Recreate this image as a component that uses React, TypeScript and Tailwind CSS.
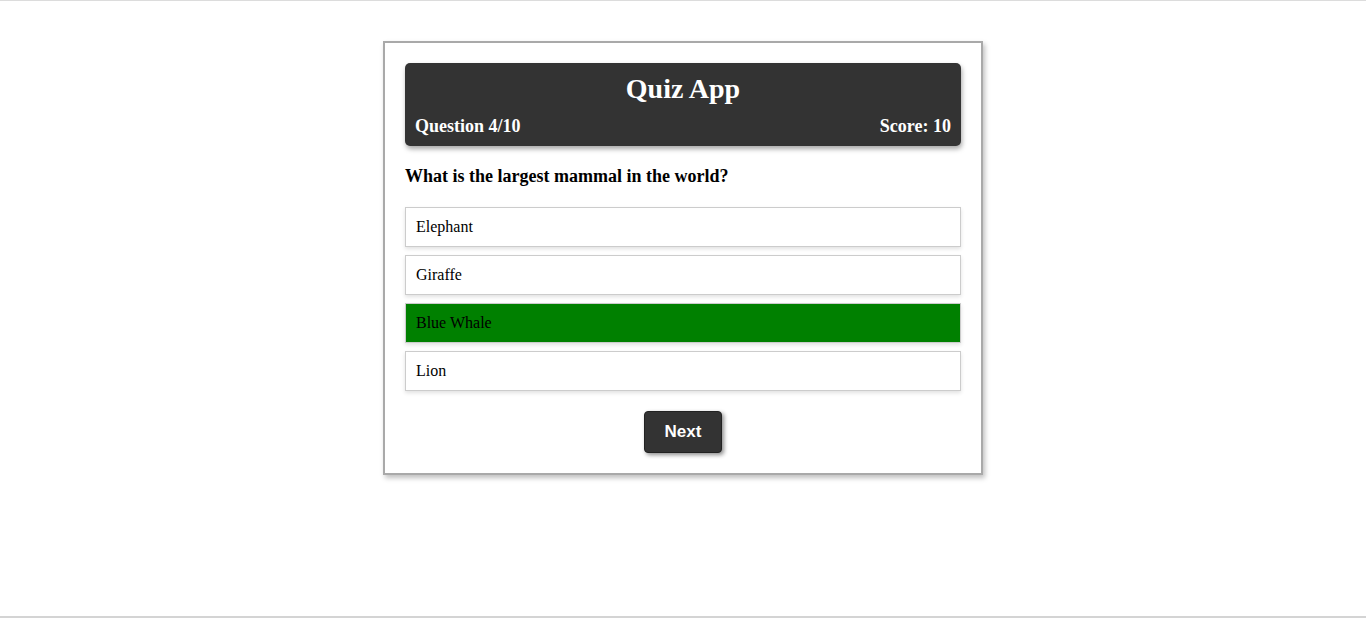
import { useState } from 'react';

const options = ['Elephant', 'Giraffe', 'Blue Whale', 'Lion'];

export default function App() {
  const [selected] = useState('Blue Whale');

  return (
    <div className="h-[618px] flex flex-col bg-white border-t border-[#dcdcdc] font-['Liberation_Serif','Times_New_Roman',serif]">
      <div className="flex-1 flex justify-center pt-[40px]">
        <div className="w-[600px] h-fit border-2 border-[#a9a9a9] bg-white p-5 shadow-[2px_3px_5px_rgba(0,0,0,0.25)]">
          <div className="bg-[#333333] rounded-[5px] px-[10px] pt-[10px] pb-[10px] text-white shadow-[1px_3px_5px_rgba(0,0,0,0.35)]">
            <h1 className="text-[28px] leading-[32px] font-bold text-center">Quiz App</h1>
            <div className="flex justify-between items-center mt-[11px] text-[18px] leading-[20px] font-bold">
              <span>Question 4/10</span>
              <span>Score: 10</span>
            </div>
          </div>

          <p className="mt-[20px] mb-[21px] text-[18px] leading-[20px] font-bold text-black">
            What is the largest mammal in the world?
          </p>

          <div className="flex flex-col gap-2">
            {options.map((opt) => (
              <div
                key={opt}
                className={`border border-[#cccccc] px-[10px] py-[10px] text-[16px] leading-[18px] text-black shadow-[0_2px_4px_rgba(0,0,0,0.12)] ${
                  opt === selected ? 'bg-[#008000]' : 'bg-white'
                }`}
              >
                {opt}
              </div>
            ))}
          </div>

          <div className="flex justify-center mt-5">
            <button className="w-[78px] h-[42px] bg-[#333333] text-white rounded-[4px] border border-[#222] text-[17px] font-bold font-['Liberation_Sans',Arial,sans-serif] shadow-[2px_2px_4px_rgba(0,0,0,0.45)]">
              Next
            </button>
          </div>
        </div>
      </div>
      <div className="h-[2px] bg-[#d4d4d4]" />
    </div>
  );
}
